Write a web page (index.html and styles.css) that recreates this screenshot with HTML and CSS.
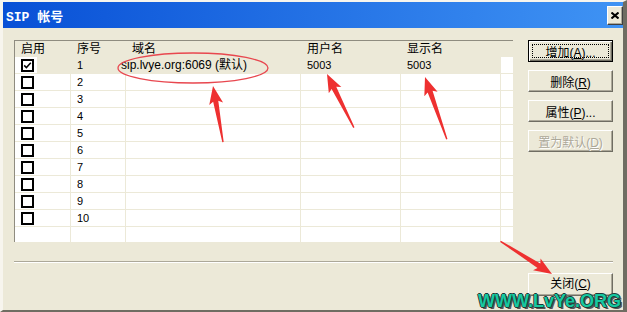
FILE: index.html
```html
<!DOCTYPE html>
<html lang="zh">
<head>
  <meta charset="UTF-8" />
  <title>SIP 帐号</title>
  <link rel="stylesheet" href="styles.css">
</head>
<body>
  <div class="window">
    <div class="titlebar">
      <span class="title">SIP 帐号</span>
      <button class="title-close" title="关闭">
        <svg width="8" height="7" viewBox="0 0 8 7"><path d="M0.5 0.5 L7.5 6.5 M7.5 0.5 L0.5 6.5" stroke="#000" stroke-width="2" fill="none"/></svg>
      </button>
    </div>

    <div class="content">
      <div class="main">
        <div class="list">
          <div class="row head">
            <div class="cell">启用</div>
            <div class="cell">序号</div>
            <div class="cell">域名</div>
            <div class="cell">用户名</div>
            <div class="cell">显示名</div>
            <div class="cell"></div>
          </div>
          <div class="row sel">
            <div class="cell"><span class="check"><svg width="9" height="9" viewBox="0 0 9 9"><path d="M1.2 4.4 L3.4 6.6 L7.8 1.8" stroke="#000" stroke-width="1.5" fill="none"/></svg></span></div>
            <div class="cell">1</div>
            <div class="cell"><span class="domain">sip.lvye.org:6069 (默认)</span></div>
            <div class="cell">5003</div>
            <div class="cell">5003</div>
            <div class="cell"></div>
          </div>
          <div class="row"><div class="cell"><span class="check"></span></div><div class="cell">2</div><div class="cell"></div><div class="cell"></div><div class="cell"></div><div class="cell"></div></div>
          <div class="row"><div class="cell"><span class="check"></span></div><div class="cell">3</div><div class="cell"></div><div class="cell"></div><div class="cell"></div><div class="cell"></div></div>
          <div class="row"><div class="cell"><span class="check"></span></div><div class="cell">4</div><div class="cell"></div><div class="cell"></div><div class="cell"></div><div class="cell"></div></div>
          <div class="row"><div class="cell"><span class="check"></span></div><div class="cell">5</div><div class="cell"></div><div class="cell"></div><div class="cell"></div><div class="cell"></div></div>
          <div class="row"><div class="cell"><span class="check"></span></div><div class="cell">6</div><div class="cell"></div><div class="cell"></div><div class="cell"></div><div class="cell"></div></div>
          <div class="row"><div class="cell"><span class="check"></span></div><div class="cell">7</div><div class="cell"></div><div class="cell"></div><div class="cell"></div><div class="cell"></div></div>
          <div class="row"><div class="cell"><span class="check"></span></div><div class="cell">8</div><div class="cell"></div><div class="cell"></div><div class="cell"></div><div class="cell"></div></div>
          <div class="row"><div class="cell"><span class="check"></span></div><div class="cell">9</div><div class="cell"></div><div class="cell"></div><div class="cell"></div><div class="cell"></div></div>
          <div class="row"><div class="cell"><span class="check"></span></div><div class="cell">10</div><div class="cell"></div><div class="cell"></div><div class="cell"></div><div class="cell"></div></div>
          <div class="row"><div class="cell"></div><div class="cell"></div><div class="cell"></div><div class="cell"></div><div class="cell"></div><div class="cell"></div></div>
        </div>

        <div class="buttons">
          <button class="btn default">增加(<u>A</u>)...</button>
          <button class="btn">删除(<u>R</u>)</button>
          <button class="btn">属性(<u>P</u>)...</button>
          <button class="btn" disabled>置为默认(<u>D</u>)</button>
        </div>
      </div>

      <div class="separator"></div>

      <div class="footer">
        <button class="btn">关闭(<u>C</u>)</button>
      </div>
    </div>

    <!-- red marks drawn over the screenshot -->
    <svg class="marks" width="627" height="312" viewBox="0 0 627 312">
      <ellipse cx="193" cy="68" rx="75" ry="15" fill="none" stroke="#e8474f" stroke-width="1.3"/>
      <g fill="#ee3030">
        <path transform="translate(213 86) rotate(-10.1)" d="M0 0 L7 18 L2.6 15.5 L0.7 57 L-0.7 57 L-2.6 15.5 L-7 18 Z"/>
        <path transform="translate(327 74) rotate(-26.6)" d="M0 0 L7 18 L2.6 15.5 L0.7 60 L-0.7 60 L-2.6 15.5 L-7 18 Z"/>
        <path transform="translate(425 77) rotate(-19.3)" d="M0 0 L7 18 L2.6 15.5 L0.7 66 L-0.7 66 L-2.6 15.5 L-7 18 Z"/>
        <path transform="translate(552 274) rotate(122.4)" d="M0 0 L7 18 L2.6 15.5 L0.7 61 L-0.7 61 L-2.6 15.5 L-7 18 Z"/>
      </g>
    </svg>

    <div class="watermark">WWW.LvYe.ORG</div>
  </div>
</body>
</html>
```

FILE: styles.css
```css
html, body {
  margin: 0;
  padding: 0;
}

body {
  width: 627px;
  height: 312px;
  overflow: hidden;
  background: #ece9d8;
  color: #000;
  font-family: "Liberation Sans", "Noto Sans CJK SC", sans-serif;
  font-size: 11px;
}

.window {
  position: relative;
  width: 627px;
  height: 312px;
  box-sizing: border-box;
  border-style: solid;
  border-width: 2px 4px 2px 3px;
  border-color: #f7f5ee #6f6d62 #6f6d62 #f7f5ee;
  background: #ece9d8;
  display: flex;
  flex-direction: column;
  overflow: hidden;
}

.titlebar {
  height: 26px;
  flex: none;
  display: flex;
  align-items: center;
  justify-content: space-between;
  padding: 0 0 0 3px;
  background: linear-gradient(to right, #0850d6, #3f93f4);
  color: #fff;
}

.title {
  font-family: "Liberation Mono", "Noto Sans CJK SC", monospace;
  font-weight: bold;
  font-size: 13px;
  white-space: pre;
}

.title-close {
  width: 16px;
  height: 19px;
  padding: 0;
  box-sizing: border-box;
  background: #ece9d8;
  border: 1px solid;
  border-color: #fff #404040 #404040 #fff;
  box-shadow: inset -1px -1px 0 #aca899;
  display: flex;
  align-items: center;
  justify-content: center;
}

.content {
  flex: 1;
  padding: 12px 10px 0 11px;
}

.main {
  display: flex;
  gap: 15px;
}

/* list view */
.list {
  width: 499px;
  height: 202px;
  box-sizing: border-box;
  border-top: 1px solid #8f8c80;
  border-left: 1px solid #8f8c80;
  background: #fff;
  overflow: hidden;
}

.row {
  display: grid;
  grid-template-columns: 56px 55px 175px 100px 100px 1fr;
  height: 17px;
}

.row .cell {
  box-sizing: border-box;
  border-right: 1px solid #ece9d8;
  border-bottom: 1px solid #ece9d8;
  padding-left: 6px;
  line-height: 16px;
  white-space: nowrap;
  display: flex;
  align-items: center;
}

.row .cell:last-child {
  border-right: 0;
}

.row.head {
  height: 16px;
  background: #ece9d8;
  font-size: 12px;
}

.row.head .cell {
  border: 0;
}

.row.sel .cell {
  background: #ece9d8;
}

.row.sel .cell:first-child {
  background: linear-gradient(to right, #fff 22px, #ece9d8 22px);
}

.row.sel .cell:last-child {
  background: #fff;
}

.domain {
  margin-left: -11px;
  font-size: 12px;
}

.check {
  width: 13px;
  height: 13px;
  box-sizing: border-box;
  border: 2px solid #000;
  background: #fff;
  display: flex;
  align-items: center;
  justify-content: center;
}

/* buttons */
.buttons {
  width: 85px;
  display: flex;
  flex-direction: column;
  gap: 8px;
}

.btn {
  width: 85px;
  height: 22px;
  padding: 0;
  box-sizing: border-box;
  background: #ece9d8;
  border: 1px solid;
  border-color: #fff #6f6d62 #6f6d62 #fff;
  box-shadow: inset -1px -1px 0 #aca899;
  font-family: "Liberation Sans", "Noto Sans CJK SC", sans-serif;
  font-size: 12px;
  color: #000;
}

.btn.default {
  border-color: #000;
  box-shadow: inset 1px 1px 0 #fff, inset -1px -1px 0 #6f6d62, inset -2px -2px 0 #aca899;
  outline: 1px dotted #000;
  outline-offset: -5px;
}

.btn:disabled {
  color: #aca899;
  text-shadow: 1px 1px 0 #fff;
}

.separator {
  margin-top: 19px;
  height: 2px;
  box-sizing: border-box;
  border-top: 1px solid #aca899;
  border-bottom: 1px solid #fff;
}

.footer {
  margin-top: 10px;
  display: flex;
  justify-content: flex-end;
}

.footer .btn {
  height: 23px;
  line-height: 14px;
  padding-bottom: 2px;
}

.marks {
  position: absolute;
  left: -3px;
  top: -2px;
  pointer-events: none;
}

.watermark {
  position: absolute;
  left: 475px;
  top: 291px;
  font-family: "Liberation Sans", sans-serif;
  font-weight: bold;
  font-size: 18px;
  line-height: 16px;
  color: #16c8a0;
  text-shadow: 1px 0 0 #1d3b38, -1px 0 0 #1d3b38, 0 1px 0 #1d3b38, 0 -1px 0 #1d3b38, 2px 2px 0 #555;
  white-space: nowrap;
}
```
